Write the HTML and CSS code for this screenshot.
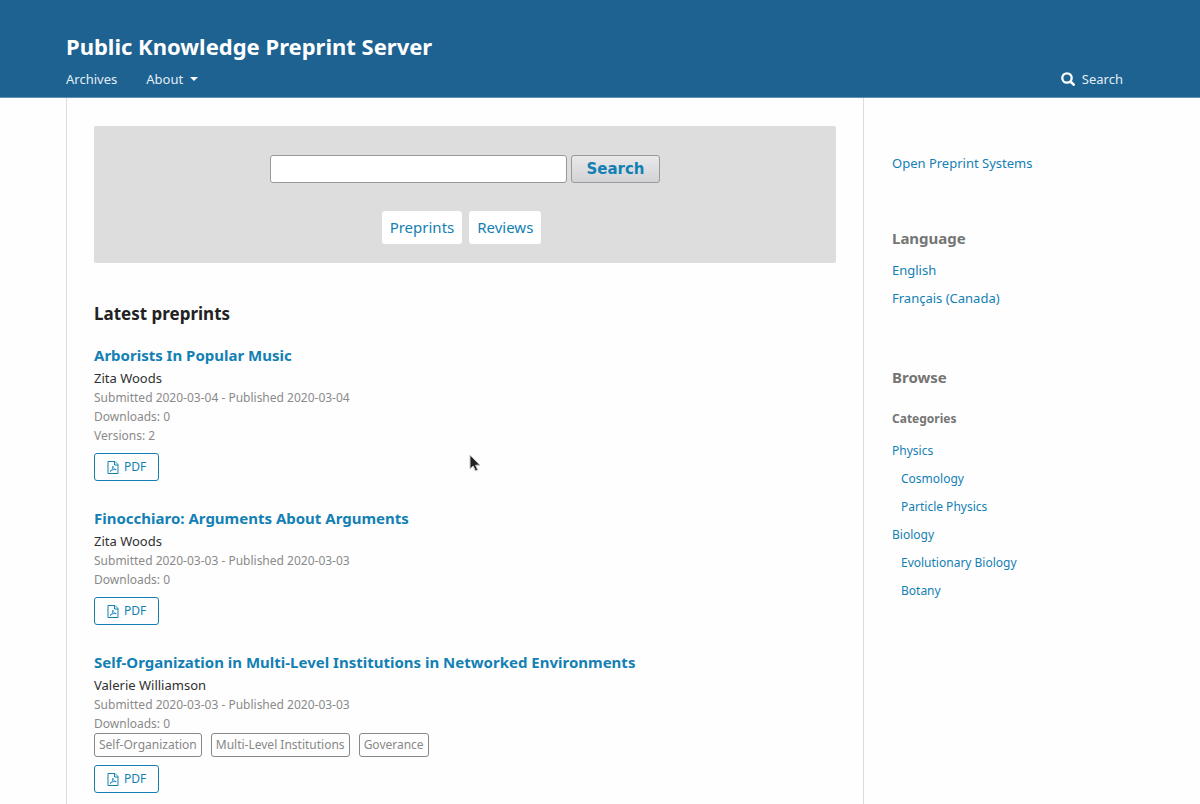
FILE: index.html
```html
<!DOCTYPE html>
<html lang="en">
<head>
<meta charset="utf-8">
<title>Public Knowledge Preprint Server</title>
<link rel="stylesheet" href="styles.css">
</head>
<body>
<svg class="symbols" aria-hidden="true">
  <symbol id="pdf-icon" viewBox="0 0 12 13">
    <path d="M1 .5h7l3 3v9H1zM7.500 .5V4H11" fill="none" stroke="currentColor"/>
    <path d="M3 10.500c2-1 3-3 2.800-5.500M5.800 5c.2 2 1.400 3.400 3.500 3.600M3 10.500C4.500 9 7 8.200 9.300 8.600" fill="none" stroke="currentColor" stroke-width=".8"/>
  </symbol>
</svg>
<header class="site-header">
  <div class="wrapper">
    <h1 class="site-name"><a href="#">Public Knowledge Preprint Server</a></h1>
    <nav class="site-nav">
      <a href="#">Archives</a>
      <a href="#">About<span class="caret"></span></a>
      <a class="nav-search" href="#"><svg class="search-icon" viewBox="0 0 14 14" aria-hidden="true"><circle cx="6" cy="6" r="4.700" fill="none" stroke="currentColor" stroke-width="2.300"/><path d="M9.500 9.500l3.200 3.200" stroke="currentColor" stroke-width="2.600" stroke-linecap="round"/></svg>Search</a>
    </nav>
  </div>
</header>
<div class="wrapper columns">
  <main class="content">
    <section class="search-panel">
      <form class="search-form">
        <input class="query" type="text" aria-label="Search query">
        <button class="submit" type="button">Search</button>
      </form>
      <div class="sections">
        <a href="#">Preprints</a>
        <a href="#">Reviews</a>
      </div>
    </section>
    <h2 class="latest">Latest preprints</h2>
    <article class="preprint">
      <h3><a href="#">Arborists In Popular Music</a></h3>
      <div class="author">Zita Woods</div>
      <div class="meta">Submitted 2020-03-04 - Published 2020-03-04</div>
      <div class="meta">Downloads: 0</div>
      <div class="meta">Versions: 2</div>
      <a class="galley" href="#"><svg aria-hidden="true"><use href="#pdf-icon"/></svg>PDF</a>
    </article>
    <article class="preprint">
      <h3><a href="#">Finocchiaro: Arguments About Arguments</a></h3>
      <div class="author">Zita Woods</div>
      <div class="meta">Submitted 2020-03-03 - Published 2020-03-03</div>
      <div class="meta">Downloads: 0</div>
      <a class="galley" href="#"><svg aria-hidden="true"><use href="#pdf-icon"/></svg>PDF</a>
    </article>
    <article class="preprint">
      <h3><a href="#">Self-Organization in Multi-Level Institutions in Networked Environments</a></h3>
      <div class="author">Valerie Williamson</div>
      <div class="meta">Submitted 2020-03-03 - Published 2020-03-03</div>
      <div class="meta">Downloads: 0</div>
      <div class="tags"><span>Self-Organization</span><span>Multi-Level Institutions</span><span>Goverance</span></div>
      <a class="galley" href="#"><svg aria-hidden="true"><use href="#pdf-icon"/></svg>PDF</a>
    </article>
  </main>
  <aside class="sidebar">
    <section class="block"><a href="#">Open Preprint Systems</a></section>
    <section class="block">
      <h2>Language</h2>
      <ul>
        <li><a href="#">English</a></li>
        <li><a href="#">Français (Canada)</a></li>
      </ul>
    </section>
    <section class="block browse">
      <h2>Browse</h2>
      <h3>Categories</h3>
      <ul>
        <li><a href="#">Physics</a></li>
        <li class="child"><a href="#">Cosmology</a></li>
        <li class="child"><a href="#">Particle Physics</a></li>
        <li><a href="#">Biology</a></li>
        <li class="child"><a href="#">Evolutionary Biology</a></li>
        <li class="child"><a href="#">Botany</a></li>
      </ul>
    </section>
  </aside>
</div>
<svg class="pointer" viewBox="0 0 12 18" aria-hidden="true"><path d="M1 1v14l3.200-3 2.300 5 2.300-1-2.200-4.800H11z" fill="#222" stroke="#ccc"/></svg>
</body>
</html>
```
FILE: styles.css
```css
* { box-sizing: border-box; }
body {
  display: flex;
  flex-direction: column;
  min-height: 100vh;
  margin: 0;
  background: #fefefe;
  color: #303030;
  font: 14px/20px "Noto Sans", sans-serif;
}
a { color: #1380b4; text-decoration: none; }
h1, h2, h3, ul { margin: 0; padding: 0; }
ul { list-style: none; }
.symbols { display: none; }
.wrapper { margin: 0 66px; }

.site-header {
  padding: 30px 0 8px;
  background: #1e6292;
  border-bottom: 1px solid #5c91b4;
}
.site-name { font-size: 22px; line-height: 32px; }
.site-name a { color: #fff; }
.site-nav { display: flex; gap: 29px; margin-top: 7px; }
.site-nav a { display: flex; align-items: center; color: #e2edf5; font-size: 13px; }
.site-nav .nav-search { margin-left: auto; margin-right: 11px; }
.caret {
  margin-left: 7px;
  border: 4px solid transparent;
  border-top-color: #fff;
  border-bottom: 0;
}
.search-icon { width: 14px; height: 14px; margin-right: 7px; color: #fff; }

.columns { display: flex; flex: 1; }
.content {
  flex: 1;
  padding: 28px 27px 10px;
  border: solid #ddd;
  border-width: 0 1px;
}
.sidebar { flex: 0 0 270px; padding: 55px 0 0 28px; }

.search-panel {
  padding: 29px 20px 19px;
  background: #ddd;
  border-radius: 2px;
}
.search-form { display: flex; justify-content: center; gap: 4px; }
.query {
  width: 297px;
  height: 28px;
  border: 1px solid #999;
  border-radius: 3px;
  background: #fff;
}
.submit {
  height: 28px;
  padding: 0 14px;
  border: 1px solid #999;
  border-radius: 3px;
  background: linear-gradient(#e9e9eb, #d3d3d6);
  color: #1380b4;
  font: bold 15px "DejaVu Sans", sans-serif;
}
.sections { display: flex; justify-content: center; margin-top: 28px; }
.sections a {
  margin-right: 7px;
  padding: 0 8px;
  border-radius: 3px;
  background: #fff;
  font-size: 15px;
  line-height: 33px;
}

.latest { margin: 39px 0 17px; color: #222; font-size: 17px; line-height: 24px; }
.preprint { margin-bottom: 25px; }
.preprint:last-child { margin-bottom: 0; }
.preprint h3 { font-size: 15px; line-height: 25px; }
.author { font-size: 13px; line-height: 20px; }
.meta { color: #8a8a8a; font-size: 12px; line-height: 19px; }
.galley {
  display: flex;
  align-items: center;
  width: fit-content;
  height: 28px;
  margin-top: 8px;
  padding: 0 12px;
  border: 1px solid #1380b4;
  border-radius: 3px;
  font-size: 12px;
}
.galley svg { width: 12px; height: 13px; margin-right: 5px; }
.tags { display: flex; gap: 9px; }
.tags span {
  padding: 0 4px;
  border: 1px solid #888;
  border-radius: 3px;
  color: #888;
  font-size: 12px;
  line-height: 22px;
}

.block { margin-bottom: 54px; font-size: 13px; }
.block:last-child { margin-bottom: 0; }
.block h2 { margin-bottom: 7px; color: #757575; font-size: 15px; line-height: 22px; }
.block h3 { margin: 21px 0 8px; color: #757575; font-size: 12px; line-height: 20px; }
.block li { line-height: 28px; }
.browse { font-size: 12px; }
.child { padding-left: 9px; }

.pointer { position: absolute; left: 469px; top: 454px; width: 12px; height: 18px; }
```
